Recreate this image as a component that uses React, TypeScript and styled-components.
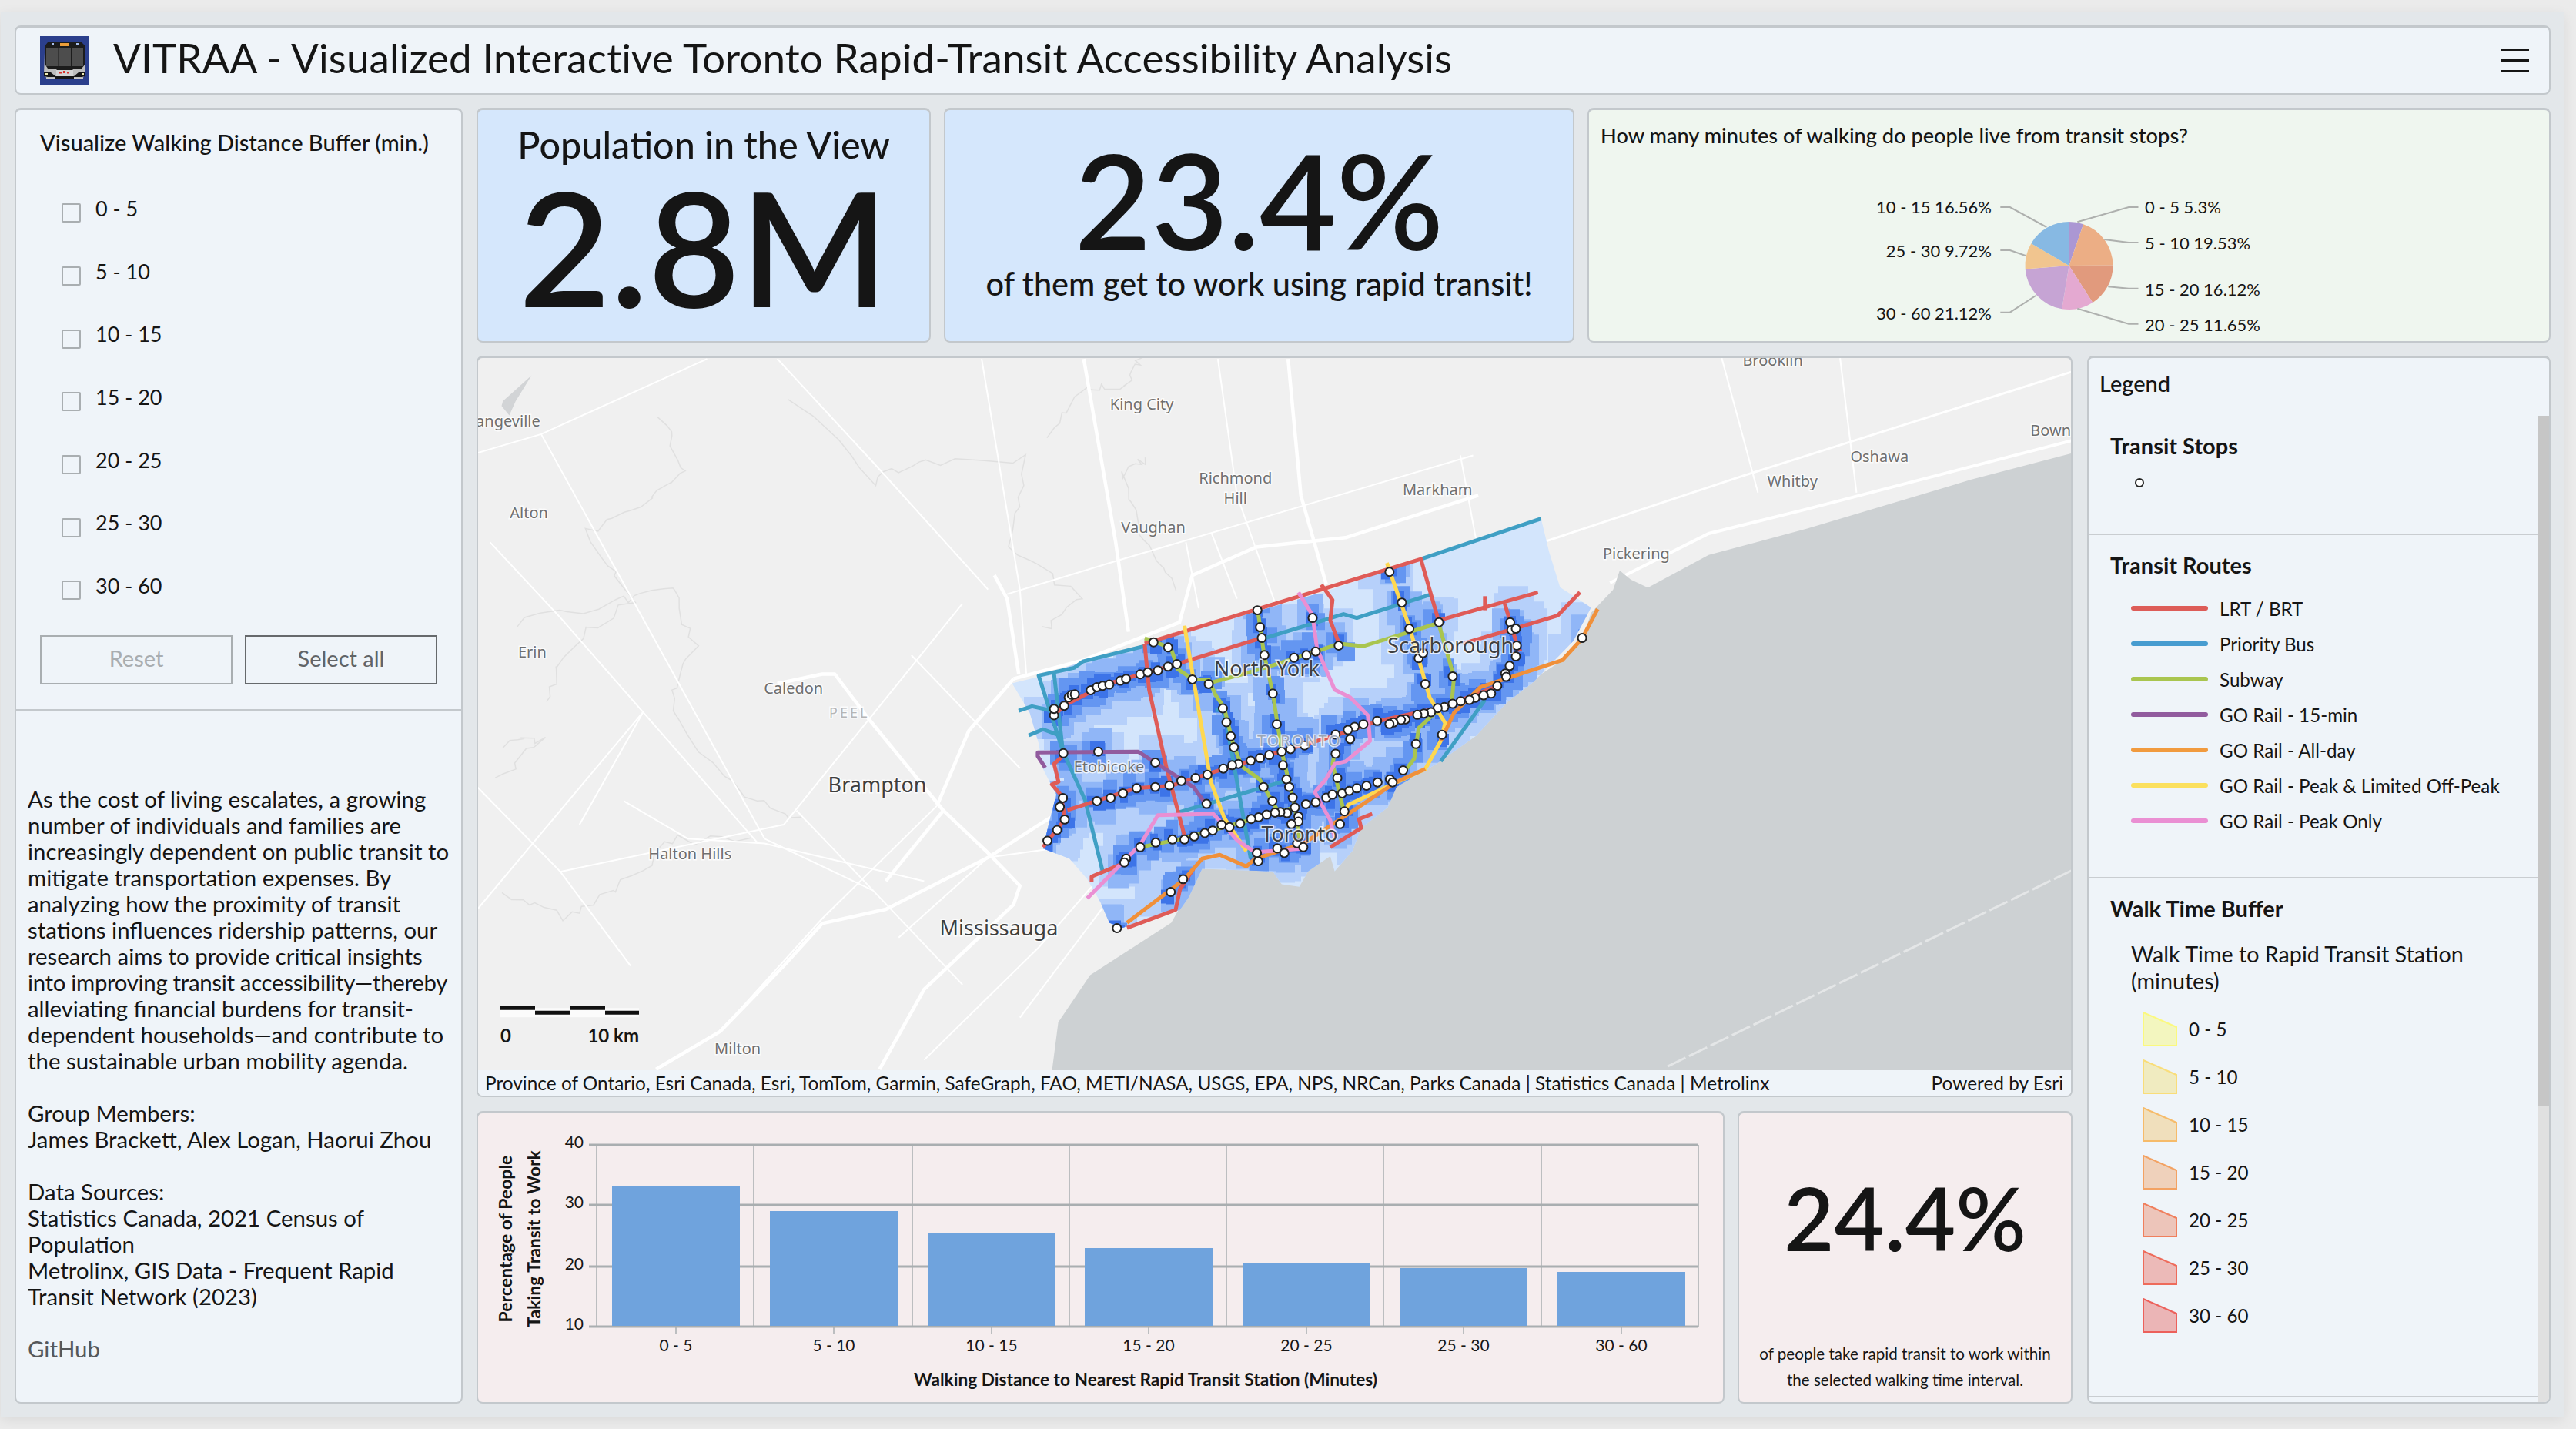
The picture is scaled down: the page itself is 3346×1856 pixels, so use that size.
import styled, { createGlobalStyle } from 'styled-components';

const GlobalStyle = createGlobalStyle`
  html, body {
    margin: 0;
    width: 3346px;
    height: 1856px;
    overflow: hidden;
    background: #ebebeb;
    color: #151515;
    font-family: Lato, "Noto Sans", sans-serif;
  }
  * { box-sizing: border-box; }
`;

const Page = styled.div`
  width: 3329px;
  height: 1824px;
  margin: 16px 0 0 1px;
  padding: 17px 17px 17px 18px;
  background: #e3e7ea;
  box-shadow: 0 4px 16px rgba(0, 0, 0, 0.08);
  display: flex;
  flex-direction: column;
  gap: 17px;
`;

const Panel = styled.section<{ $bg?: string }>`
  background: ${(p) => p.$bg ?? '#eff4f9'};
  border: 2px solid #c3c8cc;
  border-top-width: 3px;
  border-radius: 8px;
  overflow: hidden;
`;

const Header = styled(Panel)`
  height: 90px;
  flex: none;
  display: flex;
  align-items: center;
  padding: 0 26px 0 31px;
`;

const Title = styled.h1`
  margin: 0 0 8px 31px;
  flex: 1;
  font-size: 53px;
  font-weight: 400;
  letter-spacing: 0.1px;
`;

const Burger = styled.div`
  width: 36px;
  display: flex;
  flex-direction: column;
  gap: 11.5px;
  span {
    height: 2.5px;
    background: #151515;
  }
`;

const Body = styled.div`
  flex: 1;
  display: flex;
  gap: 18px;
  min-height: 0;
`;

const Side = styled(Panel)`
  width: 582px;
  flex: none;
`;

const Filters = styled.div`
  padding: 24px 31px 32px 31px;
  border-bottom: 2px solid #c3c8cc;
`;

const SideHeading = styled.h2`
  margin: 0;
  font-size: 29px;
  line-height: 36px;
  font-weight: 500;
  white-space: nowrap;
`;

const FilterList = styled.div`
  margin: 28px 0 22px 28px;
`;

const FilterRow = styled.label`
  height: 81.7px;
  display: flex;
  align-items: center;
  gap: 19px;
  font-size: 27px;
  input {
    appearance: none;
    width: 25px;
    height: 25px;
    margin: 10px 0 0;
    border: 2px solid #a9aeb1;
    border-radius: 2px;
  }
  span {
    margin-bottom: 3px;
  }
`;

const ButtonRow = styled.div`
  display: flex;
  gap: 16px;
`;

const FilterButton = styled.button<{ $off?: boolean }>`
  width: 250px;
  height: 64px;
  padding: 0 0 5px;
  background: transparent;
  border: 2px solid ${(p) => (p.$off ? '#a9aeb1' : '#66696c')};
  color: ${(p) => (p.$off ? '#a9adb0' : '#616468')};
  font: 400 29px Lato, sans-serif;
`;

const About = styled.div`
  padding: 98px 0 0 15px;
  font-size: 29.4px;
  line-height: 34px;
  white-space: pre-line;
  p {
    margin: 0 0 34px;
  }
`;

const TightLine = styled.span`
  letter-spacing: -0.32px;
`;

const Link = styled.span`
  color: #55585b;
`;

const Main = styled.div`
  flex: 1;
  display: flex;
  flex-direction: column;
  gap: 17px;
  min-width: 0;
`;

const TopRow = styled.div`
  height: 305px;
  flex: none;
  display: flex;
  gap: 17px;
`;

const StatCard = styled(Panel)<{ $w: number }>`
  width: ${(p) => p.$w}px;
  flex: none;
  display: flex;
  flex-direction: column;
  align-items: center;
`;

const PopHeading = styled.div`
  margin-top: 14px;
  font-size: 48.5px;
  line-height: 60px;
  font-weight: 500;
`;

const BigNumber = styled.div<{ $size: number; $top: number }>`
  margin-top: ${(p) => p.$top}px;
  font-size: ${(p) => p.$size}px;
  line-height: ${(p) => Math.round(p.$size * 0.9)}px;
  font-weight: 600;
  white-space: nowrap;
`;

const RapidCaption = styled.div`
  margin-top: 7px;
  font-size: 41.5px;
  line-height: 50px;
  font-weight: 500;
`;

const PieCard = styled(Panel)`
  flex: 1;
  display: flex;
  flex-direction: column;
`;

const PieHeading = styled.div`
  padding: 15px 0 0 15px;
  font-size: 27.2px;
  line-height: 36px;
  font-weight: 500;
`;

const Lower = styled.div`
  flex: 1;
  display: flex;
  gap: 19px;
  min-height: 0;
`;

const Center = styled.div`
  width: 2073px;
  flex: none;
  display: flex;
  flex-direction: column;
  gap: 18px;
`;

const MapCard = styled(Panel)`
  flex: 1;
  display: flex;
  flex-direction: column;
  background: #f0f0f0;
`;

const MapSvg = styled.svg`
  display: block;
  flex: 1;
  min-height: 0;
  width: 100%;
`;

const Attribution = styled.div`
  height: 33px;
  flex: none;
  display: flex;
  justify-content: space-between;
  align-items: center;
  padding: 0 10px 0 9px;
  background: #eff4f9;
  font-size: 24.4px;
  white-space: nowrap;
`;

const BottomRow = styled.div`
  height: 380px;
  flex: none;
  display: flex;
  gap: 17px;
`;

const ChartCard = styled(Panel)`
  width: 1621px;
  flex: none;
`;

const RateCard = styled(Panel)`
  flex: 1;
  display: flex;
  flex-direction: column;
  align-items: center;
  justify-content: space-between;
  padding: 84px 0 12px;
`;

const RateCaption = styled.div`
  font-size: 20.6px;
  line-height: 34px;
  text-align: center;
`;

const Legend = styled(Panel)`
  flex: 1;
  display: flex;
  flex-direction: column;
`;

const LegendTitle = styled.div`
  height: 75px;
  flex: none;
  padding: 15px 0 0 14px;
  font-size: 29px;
  line-height: 36px;
  font-weight: 500;
`;

const LegendBody = styled.div`
  flex: 1;
  display: flex;
  min-height: 0;
`;

const LegendContent = styled.div`
  flex: 1;
  min-width: 0;
`;

const Track = styled.div`
  width: 14px;
  flex: none;
  background: #e0e0e0;
`;

const Thumb = styled.div`
  height: 897px;
  background: #c6c6c6;
`;

const LegendSection = styled.div<{ $h: number }>`
  height: ${(p) => p.$h}px;
  padding: 21px 0 0 28px;
  border-bottom: 2px solid #c9cdd1;
`;

const LegendHeading = styled.h3`
  margin: 0;
  font-size: 29px;
  line-height: 36px;
  font-weight: 700;
`;

const StopMark = styled.span`
  display: block;
  width: 12px;
  height: 12px;
  margin: 24px 0 0 32px;
  border: 2px solid #222;
  border-radius: 50%;
  background: #fff;
`;

const RouteList = styled.div`
  margin: 15px 0 0 27px;
`;

const RouteRow = styled.div`
  height: 46px;
  display: flex;
  align-items: center;
  gap: 15px;
  font-size: 24.2px;
`;

const RouteSwatch = styled.span<{ $color: string }>`
  width: 100px;
  height: 6px;
  border-radius: 3px;
  background: ${(p) => p.$color};
`;

const BufferTitle = styled.div`
  margin: 24px 0 13px 27px;
  max-width: 470px;
  font-size: 28.7px;
  line-height: 35px;
`;

const BufferRow = styled.div`
  height: 62px;
  margin-left: 42px;
  display: flex;
  align-items: center;
  gap: 15px;
  font-size: 24.2px;
`;

const PlaceLabel = styled.text<{ $size?: number; $dark?: boolean }>`
  font-family: "Noto Sans", "Open Sans", sans-serif;
  font-size: ${(p) => p.$size ?? 20}px;
  fill: ${(p) => (p.$dark ? '#3f3f3f' : '#6f6f6f')};
  text-anchor: middle;
  dominant-baseline: central;
  paint-order: stroke;
  stroke: rgba(255, 255, 255, 0.75);
  stroke-width: 3px;
`;

const ChartText = styled.text<{ $size?: number; $bold?: boolean; $anchor?: string }>`
  font-family: Lato, sans-serif;
  font-size: ${(p) => p.$size ?? 21}px;
  font-weight: ${(p) => (p.$bold ? 700 : 400)};
  fill: #151515;
  text-anchor: ${(p) => p.$anchor ?? 'middle'};
  dominant-baseline: central;
`;

type Pt = [number, number];

// the map data was read off zoomed crops, so each list is in its crop's coordinates
const z2 = (x: number, y: number): Pt => [1240 + x * 0.574, 700 + y / 3];
const z6 = (x: number, y: number): Pt => [620 + x / 1.206, 460 + y / 1.633];
const sh = (x: number, y: number): Pt => [x * 2.134, y * 2.134];

const line = (f: (x: number, y: number) => Pt, nums: number[]) => {
  const out: string[] = [];
  for (let i = 0; i < nums.length; i += 2) {
    const [x, y] = f(nums[i], nums[i + 1]);
    out.push(`${out.length ? 'L' : 'M'}${x.toFixed(1)} ${y.toFixed(1)}`);
  }
  return out.join('');
};

let seed = 4711;
const rnd = () => {
  seed = (seed * 16807) % 2147483647;
  return seed / 2147483647;
};

// rivers and boundaries wander, so break each leg into short jittered steps
const wiggle = (nums: number[]) => {
  const out: number[] = [];
  for (let i = 0; i + 3 < nums.length; i += 2) {
    for (let k = 0; k < 7; k++) {
      const t = k / 7;
      out.push(nums[i] + (nums[i + 2] - nums[i]) * t + (rnd() - 0.5) * 16, nums[i + 1] + (nums[i + 3] - nums[i + 1]) * t + (rnd() - 0.5) * 22);
    }
  }
  return out;
};

const majorRoads = [
  [280, 1520, 380, 1440, 480, 1300, 540, 1210, 640, 1180, 800, 1070, 880, 1000, 1000, 900],
  [810, 470, 830, 520, 848, 680],
  [840, 690, 950, 650, 1100, 570, 1120, 470, 1220, 410, 1360, 390, 1568, 300],
  [470, 700, 540, 680, 560, 680, 610, 770, 730, 970, 800, 1060, 850, 1130, 840, 1170, 700, 1350, 630, 1520],
  [720, 960, 770, 800, 840, 690],
  [1270, 10, 1290, 300, 1330, 490],
  [950, 10, 1000, 400, 1020, 590],
  [640, 1120, 730, 970],
];

const minorRoads = [
  [100, 170, 450, 1030, 620, 1140],
  [0, 210, 100, 170, 360, 10],
  [790, 10, 850, 500, 860, 680],
  [1160, 10, 1190, 300, 1250, 530],
  [1110, 400, 1130, 540],
  [1150, 380, 1190, 520],
  [1000, 440, 1560, 215],
  [830, 510, 1000, 440],
  [680, 640, 850, 880],
  [760, 530, 480, 1000, 130, 1100],
  [500, 970, 620, 1140, 760, 1340],
  [1540, 215, 1568, 420],
  [230, 950, 330, 1030, 450, 1040, 700, 1120],
  [0, 920, 130, 1100, 240, 1300],
  [0, 1180, 260, 760, 160, 1000],
  [470, 10, 620, 230, 800, 500],
  [400, 1410, 540, 1200, 720, 960],
  [660, 1240, 800, 1070, 960, 1040],
  [20, 400, 130, 560, 440, 1040],
  [850, 1410, 1000, 1140],
  [700, 1500, 880, 1260, 970, 1120],
];

const rivers = [
  [290, 130, 320, 250, 270, 310, 170, 380, 240, 520, 130, 640, 100, 760],
  [490, 90, 620, 270, 700, 230, 860, 220, 840, 400, 940, 520, 880, 600],
  [60, 570, 210, 530, 300, 490, 340, 620, 300, 760, 420, 940, 520, 1000],
  [1050, 220, 1010, 260, 1040, 400, 1110, 520],
  [40, 830, 100, 820, 20, 920],
  [40, 1140, 130, 1200, 220, 1140, 300, 1030, 450, 1040],
  [1040, 10, 1020, 60, 950, 80, 880, 200],
].map(wiggle);

const water =
  line(sh, [1261, 276, 1200, 292, 1100, 322, 1040, 338, 1003, 358]) +
  line(z2, [1530, 160, 1505, 125, 1490, 200, 1440, 290, 1420, 400, 1380, 470, 1300, 560, 1250, 620, 1190, 720, 1130, 810, 1070, 880, 1000, 960, 960, 1060, 900, 1140, 830, 1210, 760, 1290, 700, 1260, 620, 1280, 560, 1250, 530, 1330, 510, 1440, 490, 1500]).replace(/^M/, 'L') +
  line(z6, [960, 1320, 910, 1420, 900, 1525]).replace(/^M/, 'L') +
  line(sh, [1262, 660, 1262, 276]).replace(/^M/, 'L') +
  'Z';

const bufferPoints = [130, 565, 190, 540, 290, 480, 430, 415, 850, 200, 1055, 80, 1327, -78, 1345, 50, 1370, 190, 1440, 270, 1400, 400, 1310, 560, 1250, 640, 1180, 770, 1090, 880, 1000, 970, 980, 1050, 920, 1130, 900, 1220, 860, 1300, 850, 1240, 800, 1300, 780, 1360, 740, 1350, 720, 1300, 560, 1290, 530, 1400, 510, 1450, 380, 1520, 350, 1500, 330, 1420, 300, 1330, 260, 1250, 200, 1210, 215, 1100, 230, 1000, 200, 900, 190, 800, 170, 680];
const bufferArea = line(z2, bufferPoints) + 'Z';

const routes: { color: string; lines: number[][] }[] = [
  {
    color: '#3f9fc4',
    lines: [
      [1327, -78, 1055, 80],
      [1075, 220, 910, 310, 880, 295, 690, 395],
      [430, 420, 290, 480, 270, 505, 190, 535, 245, 830, 295, 1020, 335, 1300],
      [225, 530, 245, 830],
      [145, 672, 175, 655, 220, 672],
      [168, 768, 200, 745, 240, 770],
      [590, 670, 610, 670, 670, 1250],
      [505, 1070, 750, 945],
      [1100, 870, 1200, 630],
    ],
  },
  {
    color: '#a9c54f',
    lines: [
      [430, 390, 450, 400, 490, 430, 505, 510, 540, 550, 575, 550, 590, 610, 610, 660, 630, 800, 650, 890, 690, 940, 720, 1030, 730, 1060],
      [575, 565, 650, 530, 710, 500, 820, 440, 870, 410, 925, 420, 1095, 330, 1130, 540, 1125, 640],
      [685, 270, 700, 450, 720, 605, 740, 830, 770, 1050, 780, 1170],
      [420, 1205, 520, 1170, 770, 1050],
      [860, 840, 855, 880, 880, 1060],
      [1100, 660, 1050, 740, 1040, 860, 1020, 905],
    ],
  },
  {
    color: '#df5b57',
    lines: [
      [430, 410, 1055, 80, 1075, 200, 1095, 320, 1320, 210],
      [503, 490, 700, 385],
      [1200, 225, 1200, 280],
      [1245, 255, 1270, 400, 1280, 440],
      [430, 410, 440, 590, 480, 900, 520, 1160],
      [830, 180, 855, 240, 850, 320, 870, 410],
      [1415, 210, 1365, 300, 1270, 350, 1150, 410],
      [255, 1060, 320, 1025, 410, 975, 490, 965, 570, 920, 740, 830, 860, 770, 960, 712, 1100, 660, 1230, 575],
      [225, 690, 250, 650, 340, 570, 503, 490],
      [200, 1205, 250, 1095, 240, 1000, 220, 960, 235, 950, 225, 880, 250, 840],
      [310, 1340, 310, 1320, 380, 1270],
      [850, 1205, 920, 1130, 915, 1095, 945, 1075],
      [390, 1520, 500, 1450, 510, 1370, 540, 1290],
    ],
  },
  { color: '#ffd850', lines: [
    [520, 340, 570, 850, 580, 950, 610, 1090, 660, 1220],
    [978, 95, 1030, 350, 1075, 620, 1110, 720, 1100, 790, 1065, 900, 890, 1040, 880, 1090],
  ] },
  { color: '#f0903a', lines: [
    [1455, 275, 1420, 390, 1375, 475, 1190, 580, 1130, 680, 1100, 790],
    [1065, 900, 1000, 950, 790, 1190, 680, 1250, 660, 1280, 600, 1235, 560, 1250, 520, 1330, 390, 1500],
  ] },
  { color: '#ea8fd3', lines: [
    [778, 210, 810, 300, 820, 430, 860, 590, 895, 620, 935, 690, 940, 790, 885, 870, 860, 880, 840, 940, 815, 990, 850, 1100, 860, 1170],
    [300, 1405, 420, 1195, 460, 1080, 585, 1075, 610, 1120, 640, 1180, 680, 1225, 790, 1210],
  ] },
  { color: '#915b9e', lines: [[205, 895, 188, 850, 188, 835, 415, 832, 540, 970, 570, 1040]] },
];

const stopCoords = [225,690,225,665,248,653,258,620,265,610,272,608,308,592,322,580,335,575,350,570,375,555,388,548,420,530,437,522,460,515,483,500,503,490,450,405,483,425,538,550,575,568,685,280,691,346,695,388,701,455,768,465,796,455,817,441,869,418,810,310,984,130,1012,250,1029,352,1096,327,1050,467,1060,447,1065,568,1127,538,1257,327,1260,357,1270,352,1272,418,1270,460,1256,497,1246,527,1248,540,1228,575,1214,605,1197,612,1178,622,1165,630,1145,635,1127,645,1108,658,1093,662,1078,678,1062,683,1047,688,1020,706,1010,708,993,718,984,724,956,712,925,725,905,735,890,747,862,765,895,783,862,840,792,808,760,822,740,832,712,845,691,857,670,867,642,880,628,885,608,898,572,922,545,935,513,946,486,964,454,970,412,975,381,995,353,1013,322,1025,245,1013,238,1048,249,1097,232,1138,210,1180,246,838,325,832,454,875,607,663,615,717,625,772,632,815,720,605,729,725,743,885,751,940,757,970,765,1012,699,970,719,1025,770,1050,795,1037,817,1030,841,1012,855,1000,877,995,893,985,910,975,932,965,957,952,985,940,991,952,1015,905,1044,802,1103,766,866,935,882,1065,872,1115,778,1085,778,1105,762,1115,752,1072,737,1068,725,1070,706,1078,688,1088,671,1095,646,1113,622,1127,604,1118,584,1140,566,1150,542,1163,520,1175,493,1175,455,1187,420,1205,388,1250,384,1265,570,1036,684,1228,687,1260,730,1210,746,1228,775,1190,789,1205,517,1330,489,1380,1420,388];

const stops: Pt[] = [];
for (let i = 0; i < stopCoords.length; i += 2) stops.push(z2(stopCoords[i], stopCoords[i + 1]));
stops.push(z6(1002, 1220));

// the walk time raster is drawn as stepped blocks round every stop
const blobLayers = [
  { color: '#b6d0fa', r: 46, n: 2 },
  { color: '#90b6f7', r: 30, n: 2 },
  { color: '#6496f1', r: 21, n: 2 },
  { color: '#3d74e8', r: 13, n: 2 },
].map((layer) => {
  let d = '';
  stops.forEach(([x, y]) => {
    for (let i = 0; i < layer.n; i++) {
      const w = layer.r * (0.7 + rnd() * 0.6);
      const h = layer.r * (0.9 + rnd() * 0.7);
      const cx = x + (rnd() - 0.5) * layer.r * 0.9;
      const cy = y + (rnd() - 0.5) * layer.r * 1.1;
      d += `M${(cx - w / 2).toFixed(0)} ${(cy - h / 2).toFixed(0)}h${w.toFixed(0)}v${h.toFixed(0)}h${(-w).toFixed(0)}z`;
    }
  });
  return { color: layer.color, d };
});

const places: { t: string; x: number; y: number; size?: number; dark?: boolean }[] = [
  { t: 'King City', x: 695, y: 246 },
  { t: 'Alton', x: 322, y: 312 },
  { t: 'Erin', x: 324, y: 397 },
  { t: 'Caledon', x: 483, y: 419 },
  { t: 'Halton Hills', x: 420, y: 520 },
  { t: 'Milton', x: 449, y: 639 },
  { t: 'Vaughan', x: 702, y: 321 },
  { t: 'Richmond', x: 752, y: 291 },
  { t: 'Hill', x: 752, y: 303 },
  { t: 'Markham', x: 875, y: 298 },
  { t: 'Whitby', x: 1091, y: 293 },
  { t: 'Oshawa', x: 1144, y: 278 },
  { t: 'Pickering', x: 996, y: 337 },
  { t: 'Etobicoke', x: 675, y: 467 },
  { t: 'Brooklin', x: 1079, y: 219 },
  { t: 'Brampton', x: 534, y: 478, size: 27, dark: true },
  { t: 'Mississauga', x: 608, y: 565, size: 27, dark: true },
  { t: 'North York', x: 771, y: 407, size: 27, dark: true },
  { t: 'Scarborough', x: 883, y: 393, size: 27, dark: true },
  { t: 'Toronto', x: 791, y: 508, size: 27, dark: true },
];

const bars = [
  { label: '0 - 5', x: 795, top: 1541 },
  { label: '5 - 10', x: 1000, top: 1573 },
  { label: '10 - 15', x: 1205, top: 1601 },
  { label: '15 - 20', x: 1409, top: 1621 },
  { label: '20 - 25', x: 1614, top: 1641 },
  { label: '25 - 30', x: 1818, top: 1647 },
  { label: '30 - 60', x: 2023, top: 1652 },
];

const gridX = [775, 979, 1185, 1389, 1593, 1797, 2002, 2206];
const gridY = [
  { v: 40, y: 1487 },
  { v: 30, y: 1565 },
  { v: 20, y: 1645 },
  { v: 10, y: 1723 },
];

const slices = [
  { pct: 5.3, color: '#ab97d3' },
  { pct: 19.53, color: '#ecae85' },
  { pct: 16.12, color: '#e19a7d' },
  { pct: 11.65, color: '#e4a9d1' },
  { pct: 21.12, color: '#c6a4d4' },
  { pct: 9.72, color: '#f1c58f' },
  { pct: 16.56, color: '#87b9e3' },
];

const z3 = (x: number, y: number): Pt => [2040 + x / 1.2, 130 + y / 3];

const pieLabels = [
  { t: '0 - 5 5.3%', x: 2786, y: 269, lead: [885, 420, 870, 420, 790, 478] },
  { t: '5 - 10 19.53%', x: 2786, y: 316, lead: [885, 558, 870, 558, 832, 546] },
  { t: '15 - 20 16.12%', x: 2786, y: 376, lead: [885, 737, 870, 737, 838, 730] },
  { t: '20 - 25 11.65%', x: 2786, y: 422, lead: [885, 875, 870, 875, 790, 815] },
  { t: '10 - 15 16.56%', x: 2587, y: 269, end: true, lead: [670, 420, 685, 420, 742, 498] },
  { t: '25 - 30 9.72%', x: 2587, y: 326, end: true, lead: [670, 588, 685, 588, 710, 610] },
  { t: '30 - 60 21.12%', x: 2587, y: 407, end: true, lead: [670, 830, 685, 830, 725, 765] },
];

const ranges = ['0 - 5', '5 - 10', '10 - 15', '15 - 20', '20 - 25', '25 - 30', '30 - 60'];

const routeKeys = [
  { label: 'LRT / BRT', color: '#dd5c58' },
  { label: 'Priority Bus', color: '#479cd0' },
  { label: 'Subway', color: '#a9c54f' },
  { label: 'GO Rail - 15-min', color: '#915b9e' },
  { label: 'GO Rail - All-day', color: '#f19a3e' },
  { label: 'GO Rail - Peak & Limited Off-Peak', color: '#fbe05e' },
  { label: 'GO Rail - Peak Only', color: '#ea8fd3' },
];

const bufferKeys = [
  { stroke: '#fbf97f', fill: '#f3f6bf' },
  { stroke: '#f9dd7a', fill: '#f0ebc0' },
  { stroke: '#f6bb6a', fill: '#f0dfbc' },
  { stroke: '#f3a263', fill: '#efd1bb' },
  { stroke: '#f07f5d', fill: '#edc5ba' },
  { stroke: '#ee6b5b', fill: '#ecbab8' },
  { stroke: '#ec605b', fill: '#ebb5b6' },
];

const introTop = `As the cost of living escalates, a growing
number of individuals and families are
increasingly dependent on public transit to
mitigate transportation expenses. By
analyzing how the proximity of transit
stations influences ridership patterns, our
research aims to provide critical insights
`;

const introBottom = `
alleviating financial burdens for transit-
dependent households—and contribute to
the sustainable urban mobility agenda.`;

const members = `Group Members:
James Brackett, Alex Logan, Haorui Zhou`;

const sources = `Data Sources:
Statistics Canada, 2021 Census of
Population
Metrolinx, GIS Data - Frequent Rapid
Transit Network (2023)`;

function BusLogo() {
  return (
    <svg width="64" height="64" viewBox="0 0 64 64">
      <rect width="64" height="64" fill="#2b3f8c" />
      <path d="M6 22 L58 22 L59 50 L54 56 L10 56 L5 50Z" fill="#bdbdbd" />
      <path d="M10 8 H54 L59 13 V36 L54 42 H44 L42 44 H22 L20 42 H10 L6 36 V13Z" fill="#1c1c1c" />
      <rect x="8" y="15" width="15.5" height="24" fill="#4d4d4d" />
      <rect x="25" y="15" width="15" height="24" fill="#4d4d4d" />
      <rect x="42" y="15" width="14" height="24" fill="#4d4d4d" />
      <rect x="26" y="9" width="12" height="4" fill="#ec9e3a" />
      <rect x="15" y="9" width="3" height="3" fill="#a8c0ee" />
      <rect x="47" y="9" width="3" height="3" fill="#a8c0ee" />
      <rect x="21" y="44" width="22" height="8" fill="#d4d4d4" />
      <rect x="30" y="45" width="3" height="3" fill="#d8322c" />
      <rect x="25" y="47" width="3" height="1.5" fill="#d8322c" />
      <rect x="35" y="47" width="3" height="1.5" fill="#d8322c" />
      <path d="M5 47 H14 L20 52 H44 L50 47 H59 V52 L54 53 H44 V56 H20 V53 H10 L5 52Z" fill="#161616" />
      <rect x="7" y="48" width="3" height="3" fill="#efeeb4" />
      <rect x="54" y="48" width="3" height="3" fill="#efeeb4" />
      <rect x="8" y="54" width="12" height="2" fill="#c8c8c8" />
      <rect x="44" y="54" width="12" height="2" fill="#c8c8c8" />
    </svg>
  );
}

function TransitMap() {
  return (
    <MapSvg viewBox="621 465 2069 927" preserveAspectRatio="none">
      <defs>
        <clipPath id="buffer-clip">
          <path d={bufferArea} />
        </clipPath>
      </defs>
      {rivers.map((r, i) => (
        <path key={i} d={line(z6, r)} fill="none" stroke="#e0e0e0" strokeWidth="1.5" />
      ))}
      <path d={line(z6, [40, 100, 85, 45, 60, 100, 50, 130, 38, 110])} fill="#d2d4d6" />
      {minorRoads.map((r, i) => (
        <path key={i} d={line(z6, r)} fill="none" stroke="#fff" strokeWidth="2" />
      ))}
      {majorRoads.map((r, i) => (
        <path key={i} d={line(z6, r)} fill="none" stroke="#fff" strokeWidth="4.5" strokeLinejoin="round" />
      ))}
      <path d={line(sh, [980, 355, 1040, 325, 1100, 310, 1262, 268])} fill="none" stroke="#fff" strokeWidth="4" />
      <path d={line(sh, [940, 330, 1060, 290, 1262, 226])} fill="none" stroke="#fff" strokeWidth="3" />
      <path d={line(sh, [1048, 218, 1070, 300])} fill="none" stroke="#fff" strokeWidth="2" />
      <path d={line(sh, [1120, 218, 1130, 300])} fill="none" stroke="#fff" strokeWidth="2" />
      <path d={water} fill="#cdd1d3" />
      <path d={line(sh, [1015, 650, 1262, 530])} fill="none" stroke="#e4e6e7" strokeWidth="3" strokeDasharray="26 5" />
      <path d={bufferArea} fill="#d3e5fc" />
      <g clipPath="url(#buffer-clip)">
        {blobLayers.map((b) => (
          <path key={b.color} d={b.d} fill={b.color} />
        ))}
      </g>
      {routes.map((r) =>
        r.lines.map((l, i) => (
          <path key={r.color + i} d={line(z2, l)} fill="none" stroke={r.color} strokeWidth="5" strokeLinejoin="round" />
        )),
      )}
      {stops.map(([x, y], i) => (
        <circle key={i} cx={x} cy={y} r="5.5" fill="#fff" stroke="#222" strokeWidth="2" />
      ))}
      {places.map((p) => {
        const [x, y] = sh(p.x, p.y);
        return (
          <PlaceLabel key={p.t} x={x} y={y} $size={p.size} $dark={p.dark}>
            {p.t}
          </PlaceLabel>
        );
      })}
      <PlaceLabel x={sh(328, 256)[0] - 40} y={sh(328, 256)[1]} $size={20}>
        angeville
      </PlaceLabel>
      <PlaceLabel x={2690} y={sh(1248, 262)[1]} $size={20} style={{ textAnchor: 'end' }}>
        Bown
      </PlaceLabel>
      <PlaceLabel x={sh(517, 434)[0]} y={sh(517, 434)[1]} $size={18} letterSpacing="3" style={{ fill: '#b5b5b5' }}>
        PEEL
      </PlaceLabel>
      <PlaceLabel x={sh(791, 451)[0]} y={sh(791, 451)[1]} $size={20} letterSpacing="2" style={{ fill: '#9aa5b5' }}>
        TORONTO
      </PlaceLabel>
      <g fill="none" strokeWidth="5">
        <path d="M650 1317 H830" stroke="#fff" strokeWidth="12" opacity="0.7" />
        <path d="M650 1311 H695 M741 1311 H786" stroke="#111" />
        <path d="M695 1317 H741 M786 1317 H830" stroke="#111" />
      </g>
      <ChartText x={657} y={1346} $size={24} $bold>
        0
      </ChartText>
      <ChartText x={830} y={1346} $size={24} $bold $anchor="end">
        10 km
      </ChartText>
    </MapSvg>
  );
}

function RidershipChart() {
  return (
    <svg width="100%" height="100%" viewBox="621 1446 1617 375" style={{ display: 'block' }}>
      {gridX.map((x) => (
        <line key={x} x1={x} x2={x} y1={1487} y2={1723} stroke="#a9aeb0" strokeWidth="1.5" />
      ))}
      {gridY.map((g) => (
        <line key={g.v} x1={765} x2={2206} y1={g.y} y2={g.y} stroke="#a9aeb0" strokeWidth="3" />
      ))}
      {bars.map((b) => (
        <g key={b.label}>
          <rect x={b.x} y={b.top} width={166} height={1722 - b.top} fill="#6fa3dd" />
          <line x1={b.x + 83} x2={b.x + 83} y1={1723} y2={1733} stroke="#a9aeb0" strokeWidth="1.5" />
          <ChartText x={b.x + 83} y={1746} $size={21}>
            {b.label}
          </ChartText>
        </g>
      ))}
      {gridY.map((g) => (
        <ChartText key={g.v} x={758} y={g.y - 5} $size={21} $anchor="end">
          {g.v}
        </ChartText>
      ))}
      <ChartText x={1488} y={1791} $size={22.7} $bold>
        Walking Distance to Nearest Rapid Transit Station (Minutes)
      </ChartText>
      <ChartText transform="translate(656 1609) rotate(-90)" $size={23} $bold>
        Percentage of People
      </ChartText>
      <ChartText transform="translate(693 1609) rotate(-90)" $size={23} $bold>
        Taking Transit to Work
      </ChartText>
    </svg>
  );
}

function WalkPie() {
  const cx = 2687.5;
  const cy = 346;
  const r = 57;
  let angle = -Math.PI / 2;
  return (
    <svg width="1247" height="248" viewBox="2064 195 1247 248" style={{ display: 'block' }}>
      {slices.map((s) => {
        const next = angle + (s.pct / 100) * Math.PI * 2;
        const x1 = cx + r * Math.cos(angle);
        const y1 = cy + r * Math.sin(angle);
        const x2 = cx + r * Math.cos(next);
        const y2 = cy + r * Math.sin(next);
        const large = next - angle > Math.PI ? 1 : 0;
        angle = next;
        return <path key={s.color} d={`M${cx} ${cy}L${x1} ${y1}A${r} ${r} 0 ${large} 1 ${x2} ${y2}Z`} fill={s.color} />;
      })}
      {pieLabels.map((l) => (
        <g key={l.t}>
          <path d={line(z3, l.lead)} fill="none" stroke="#aeb0ae" strokeWidth="2" />
          <ChartText x={l.x} y={l.y} $size={22} $anchor={l.end ? 'end' : 'start'}>
            {l.t}
          </ChartText>
        </g>
      ))}
    </svg>
  );
}

export default function App() {
  return (
    <>
      <GlobalStyle />
      <Page>
        <Header>
          <BusLogo />
          <Title>VITRAA - Visualized Interactive Toronto Rapid-Transit Accessibility Analysis</Title>
          <Burger>
            <span />
            <span />
            <span />
          </Burger>
        </Header>
        <Body>
          <Side>
            <Filters>
              <SideHeading>Visualize Walking Distance Buffer (min.)</SideHeading>
              <FilterList>
                {ranges.map((r) => (
                  <FilterRow key={r}>
                    <input type="checkbox" />
                    <span>{r}</span>
                  </FilterRow>
                ))}
              </FilterList>
              <ButtonRow>
                <FilterButton $off>Reset</FilterButton>
                <FilterButton>Select all</FilterButton>
              </ButtonRow>
            </Filters>
            <About>
              <p>
                {introTop}
                <TightLine>into improving transit accessibility—thereby</TightLine>
                {introBottom}
              </p>
              <p>{members}</p>
              <p>{sources}</p>
              <Link>GitHub</Link>
            </About>
          </Side>
          <Main>
            <TopRow>
              <StatCard $w={590} $bg="#d5e7fc">
                <PopHeading>Population in the View</PopHeading>
                <BigNumber $size={206} $top={10}>
                  2.8M
                </BigNumber>
              </StatCard>
              <StatCard $w={819} $bg="#d5e7fc">
                <BigNumber $size={172} $top={38}>
                  23.4%
                </BigNumber>
                <RapidCaption>of them get to work using rapid transit!</RapidCaption>
              </StatCard>
              <PieCard $bg="#eff6ef">
                <PieHeading>How many minutes of walking do people live from transit stops?</PieHeading>
                <WalkPie />
              </PieCard>
            </TopRow>
            <Lower>
              <Center>
                <MapCard>
                  <TransitMap />
                  <Attribution>
                    <span>
                      Province of Ontario, Esri Canada, Esri, TomTom, Garmin, SafeGraph, FAO, METI/NASA, USGS, EPA,
                      NPS, NRCan, Parks Canada | Statistics Canada | Metrolinx
                    </span>
                    <span>Powered by Esri</span>
                  </Attribution>
                </MapCard>
                <BottomRow>
                  <ChartCard $bg="#f5edee">
                    <RidershipChart />
                  </ChartCard>
                  <RateCard $bg="#f5edee">
                    <BigNumber $size={113} $top={0}>
                      24.4%
                    </BigNumber>
                    <RateCaption>
                      of people take rapid transit to work within
                      <br />
                      the selected walking time interval.
                    </RateCaption>
                  </RateCard>
                </BottomRow>
              </Center>
              <Legend>
                <LegendTitle>Legend</LegendTitle>
                <LegendBody>
                  <LegendContent>
                    <LegendSection $h={155}>
                      <LegendHeading>Transit Stops</LegendHeading>
                      <StopMark />
                    </LegendSection>
                    <LegendSection $h={446}>
                      <LegendHeading>Transit Routes</LegendHeading>
                      <RouteList>
                        {routeKeys.map((r) => (
                          <RouteRow key={r.label}>
                            <RouteSwatch $color={r.color} />
                            <span>{r.label}</span>
                          </RouteRow>
                        ))}
                      </RouteList>
                    </LegendSection>
                    <LegendSection $h={674}>
                      <LegendHeading>Walk Time Buffer</LegendHeading>
                      <BufferTitle>Walk Time to Rapid Transit Station (minutes)</BufferTitle>
                      {bufferKeys.map((k, i) => (
                        <BufferRow key={k.stroke}>
                          <svg width="45" height="45" viewBox="0 0 45 45">
                            <path d="M1 1 L44 20 V44 H1Z" fill={k.fill} stroke={k.stroke} strokeWidth="2" />
                          </svg>
                          <span>{ranges[i]}</span>
                        </BufferRow>
                      ))}
                    </LegendSection>
                  </LegendContent>
                  <Track>
                    <Thumb />
                  </Track>
                </LegendBody>
              </Legend>
            </Lower>
          </Main>
        </Body>
      </Page>
    </>
  );
}
